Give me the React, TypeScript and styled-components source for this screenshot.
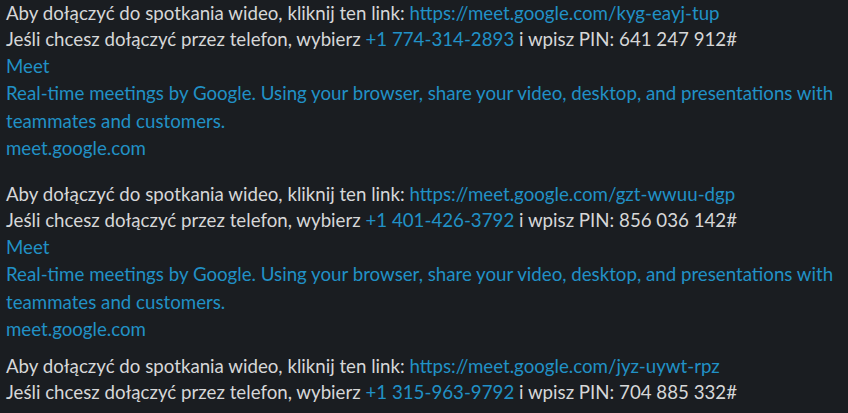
import React from "react";
import styled, { createGlobalStyle } from "styled-components";

const Global = createGlobalStyle`
  html, body { margin: 0; padding: 0; background: #1a1d21; }
  body { font-family: Lato, "Noto Sans", sans-serif; }
`;

const Page = styled.div`
  background: #1a1d21;
  width: 848px;
  height: 413px;
  overflow: hidden;
  padding: 0 6px;
  box-sizing: border-box;
  display: flex;
  flex-direction: column;
`;

const Message = styled.div<{ $gap: number }>`
  display: flex;
  flex-direction: column;
  margin-bottom: ${(p) => p.$gap}px;
`;

const Line = styled.div`
  color: #d6d7d8;
  font-size: 18.7px;
  line-height: 26px;
  white-space: nowrap;
`;

const Link = styled.a`
  color: #2191c6;
  text-decoration: none;
`;

const Unfurl = styled.div`
  display: flex;
  flex-direction: column;
  margin-top: 1px;
  color: #2191c6;
  font-size: 18.7px;
  line-height: 27.3px;
  white-space: nowrap;
`;

const UnfurlText = styled.div``;

type Meeting = { code: string; phone: string; pin: string; unfurl: boolean; gap: number };

const meetings: Meeting[] = [
  { code: "kyg-eayj-tup", phone: "+1 774-314-2893", pin: "641 247 912#", unfurl: true, gap: 19 },
  { code: "gzt-wwuu-dgp", phone: "+1 401-426-3792", pin: "856 036 142#", unfurl: true, gap: 10 },
  { code: "jyz-uywt-rpz", phone: "+1 315-963-9792", pin: "704 885 332#", unfurl: false, gap: 0 },
];

export default function App() {
  return (
    <>
      <Global />
      <Page>
        {meetings.map((m) => (
          <Message key={m.code} $gap={m.gap}>
            <Line>
              Aby dołączyć do spotkania wideo, kliknij ten link:{" "}
              <Link href="#">https://meet.google.com/{m.code}</Link>
            </Line>
            <Line>
              Jeśli chcesz dołączyć przez telefon, wybierz <Link href="#">{m.phone}</Link> i wpisz PIN: {m.pin}
            </Line>
            {m.unfurl && (
              <Unfurl>
                <UnfurlText>Meet</UnfurlText>
                <UnfurlText>
                  Real-time meetings by Google. Using your browser, share your video, desktop, and presentations with
                </UnfurlText>
                <UnfurlText>teammates and customers.</UnfurlText>
                <UnfurlText>meet.google.com</UnfurlText>
              </Unfurl>
            )}
          </Message>
        ))}
      </Page>
    </>
  );
}
